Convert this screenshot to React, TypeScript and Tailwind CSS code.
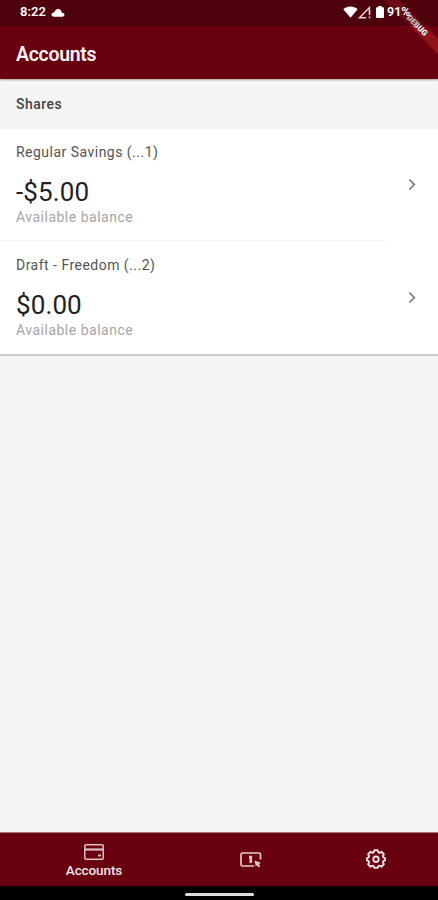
type Account = {
  id: number;
  name: string;
  balance: string;
};

const accounts: Account[] = [
  { id: 1, name: "Regular Savings (...1)", balance: "-$5.00" },
  { id: 2, name: "Draft - Freedom (...2)", balance: "$0.00" },
];

// translucent, so the debug banner shows through it
function StatusBar() {
  return (
    <div className="relative z-20 h-[26px] shrink-0 bg-black/25 flex items-center justify-between pl-[20px] pr-[26px] pb-[2px] text-white">
      <div className="flex items-center gap-[4px]">
        <span className="text-[13px] leading-4 font-semibold w-[27px] whitespace-nowrap">8:22</span>
        <svg width="14" height="9" viewBox="0 0 14 9" fill="currentColor">
          <path d="M2.8 8.8Q.3 8.4.4 6.4.6 4.5 3.4 4.3 4.7.8 7.5 1q2.7.2 3.2 3.4 2.9.4 2.9 2.4-.1 1.7-2 2z" />
        </svg>
      </div>
      <div className="flex items-center">
        <svg width="15" height="12" viewBox="0 0 15 12" fill="currentColor">
          <path d="M.3 3.2C4.3-.5 10.7-.5 14.7 3.2L7.5 11.8z" />
        </svg>
        <svg width="13" height="13" viewBox="0 0 13 13" fill="none" stroke="#e6d8da">
          <path d="M11.5 6V1.5L1.5 11.8H8" strokeWidth="1.4" />
          <path d="M11.5 5v4M11.5 10.5v1.8" strokeWidth="1.6" />
        </svg>
        <svg width="8" height="12" viewBox="0 0 8 12" className="ml-[5px]" fill="currentColor">
          <path d="M2.3 0h3.4v1.3H7q1 0 1 1V11q0 1-1 1H1q-1 0-1-1V2.3q0-1 1-1h1.3z" />
        </svg>
        <span className="ml-[3px] w-[25px] text-[12.5px] leading-4 font-semibold whitespace-nowrap">91%</span>
      </div>
    </div>
  );
}

function DebugBanner() {
  return (
    <div className="absolute z-10 top-0 right-0 w-[70px] h-[70px] overflow-hidden">
      <div className="absolute left-[-2px] top-[18.5px] w-[100px] h-[11px] rotate-45 bg-[#8f111a] flex items-center justify-center">
        <span className="pl-[3px] text-[8px] leading-none font-black text-white">DEBUG</span>
      </div>
    </div>
  );
}

function AccountRow({ account, last }: { account: Account; last: boolean }) {
  return (
    <div className="flex h-[113px] bg-white">
      <div
        className={`w-[386px] pl-4 pt-[16px] border-b ${last ? "border-transparent" : "border-[#f2f2f2]"}`}
      >
        <div className="text-[14px] leading-4 tracking-[0.48px] text-[#555555]">{account.name}</div>
        <div className="mt-[17px] text-[26px] leading-[30px] tracking-[0.1px] text-[#222222]">{account.balance}</div>
        <div className="mt-[2px] text-[14px] leading-4 tracking-[0.5px] text-[#a6a6a6]">Available balance</div>
      </div>
      <div className="flex-1 flex justify-center items-center">
        <svg width="8" height="12" viewBox="0 0 8 12" fill="none" stroke="#858585" strokeWidth="1.8">
          <path d="M1.3 .6L6.3 5.6L1.3 10.6" />
        </svg>
      </div>
    </div>
  );
}

function CardIcon() {
  return (
    <svg width="20" height="16" viewBox="0 0 20 16" fill="none" stroke="#dcbfc3" strokeWidth="1.5">
      <rect x=".8" y=".8" width="18.4" height="14.4" rx="1" />
      <path d="M1 5.5h18" strokeWidth="2.2" />
      <path d="M14 11.5h3" strokeWidth="1.8" />
    </svg>
  );
}

function TransferIcon() {
  return (
    <svg width="22" height="16" viewBox="0 0 22 16" fill="none" stroke="#e3c9cc" strokeWidth="1.7">
      <path d="M14 14H2.5Q1 14 1 12.5V2.5Q1 1 2.5 1H19q1.5 0 1.5 1.5V7.5" />
      <path d="M9 5h1.8V11" strokeWidth="2.6" />
      <path d="M14.5 8.5l6.5 2.2-2 1.4 1.2 2.1-1.6 1.2-1.5-2.1-1.3 1.2z" fill="#e3c9cc" stroke="none" />
    </svg>
  );
}

function GearIcon() {
  return (
    <svg width="20" height="20" viewBox="0 0 20 20" fill="none" stroke="#ecdadd" strokeWidth="2" strokeLinejoin="round">
      <path d="M8.3 1.3h3.4l.7 2 1.1.5 2-1 2.3 2.4-.9 1.9.4 1.2 1.8.8v2.3l-1.8.8-.4 1.2.9 1.9-2.3 2.4-2-1-1.1.5-.7 1.6H8.3l-.7-1.6-1.1-.5-2 1-2.3-2.4.9-1.9-.4-1.2-1.8-.8V9.1l1.8-.8.4-1.2-.9-1.9 2.3-2.4 2 1 1.1-.5z" />
      <circle cx="10" cy="10.2" r="2.7" />
    </svg>
  );
}

function BottomNav() {
  return (
    <div className="h-[54px] shrink-0 border-t border-[#a77b80] bg-[#68000f] flex">
      <button type="button" className="w-[188px] flex flex-col items-center pt-[11px]">
        <CardIcon />
        <span className="mt-[2px] text-[13.5px] leading-4 font-medium tracking-[-0.1px] text-[#f3e6e8]">Accounts</span>
      </button>
      <button type="button" className="w-[125px] flex justify-center items-center">
        <TransferIcon />
      </button>
      <button type="button" className="w-[125px] flex justify-center items-center pb-px">
        <GearIcon />
      </button>
    </div>
  );
}

export default function App() {
  return (
    <div className="relative w-[438px] h-[900px] overflow-hidden flex flex-col bg-[#f4f4f4] font-['Roboto',sans-serif]">
      <div className="relative z-10 shrink-0 bg-[#68000f] shadow-[0_1px_2px_rgba(0,0,0,0.35)]">
        <StatusBar />
        <div className="h-[53px] pl-4 pt-[5px] flex items-center">
          <h1 className="text-[19.5px] leading-6 font-semibold tracking-[-0.3px] text-[#fbf3f4]">Accounts</h1>
        </div>
        <DebugBanner />
      </div>
      <div className="relative h-[50px] shrink-0 bg-[#f5f5f5] pl-4 flex items-center">
        <h2 className="text-[14px] leading-4 font-medium tracking-[0.5px] text-[#444444]">Shares</h2>
      </div>
      <div className="border-b-2 border-[#cbcbcb] -mt-px">
        {accounts.map((account, index) => (
          <AccountRow key={account.id} account={account} last={index === accounts.length - 1} />
        ))}
      </div>
      <div className="flex-1" />
      <BottomNav />
      <div className="h-[14px] shrink-0 bg-black flex justify-center items-center pt-[2px]">
        <div className="w-[69px] h-[3px] rounded-sm bg-[#dcdcdc]" />
      </div>
    </div>
  );
}
